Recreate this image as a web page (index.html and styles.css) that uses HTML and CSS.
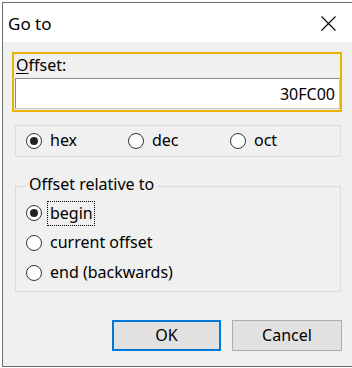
FILE: index.html
```html
<!DOCTYPE html>
<html lang="en">
<head>
    <meta charset="UTF-8">
    <title>Go to</title>
    <link rel="stylesheet" href="styles.css">
</head>
<body>
    <div class="window">
        <div class="titlebar">
            <span class="title">Go to</span>
            <svg class="close" width="15" height="15" viewBox="0 0 15 15">
                <path d="M0.5 0.5 L14.5 14.5 M14.5 0.5 L0.5 14.5" stroke="#000" stroke-width="1.1" fill="none"/>
            </svg>
        </div>
        <div class="content">
            <div class="focus-frame">
                <label class="field-label" for="offset"><u>O</u>ffset:</label>
                <input class="edit" type="text" id="offset" value="30FC00">
            </div>

            <div class="base-box">
                <label class="radio"><input type="radio" name="base" checked><span>hex</span></label>
                <label class="radio"><input type="radio" name="base"><span>dec</span></label>
                <label class="radio"><input type="radio" name="base"><span>oct</span></label>
            </div>

            <fieldset class="relative-box">
                <legend>Offset relative to</legend>
                <label class="radio row"><input type="radio" name="rel" checked><span class="focused">begin</span></label>
                <label class="radio row"><input type="radio" name="rel"><span>current offset</span></label>
                <label class="radio row"><input type="radio" name="rel"><span>end (backwards)</span></label>
            </fieldset>

            <div class="buttons">
                <button class="btn default">OK</button>
                <button class="btn">Cancel</button>
            </div>
        </div>
    </div>
</body>
</html>
```

FILE: styles.css
```css
body {
    margin: 0;
    background: #fff;
    overflow: hidden;
    font-family: "Noto Sans", "Open Sans", sans-serif;
    font-size: 16px;
    color: #000;
}

.window {
    margin: 2px 0 0 2px;
    width: 349px;
    height: 363px;
    border: 1px solid #6e6e6e;
    border-right: none;
    display: flex;
    flex-direction: column;
}

.titlebar {
    height: 39px;
    background: #fff;
    display: flex;
    align-items: center;
    justify-content: space-between;
}

.title {
    padding: 2px 0 0 5px;
    font-size: 17px;
}

.close {
    margin-right: 16px;
    margin-top: 1px;
}

.content {
    flex: 1;
    background: #f0f0f0;
    padding: 10px 0 0 9px;
}

/* yellow focus rectangle round the offset field */
.focus-frame {
    box-sizing: border-box;
    width: 330px;
    height: 60px;
    border: 2px solid #e8b400;
}

.field-label {
    display: block;
    height: 24px;
    line-height: 22px;
    padding-left: 2px;
}

.field-label u {
    text-underline-offset: 2px;
}

.edit {
    display: block;
    box-sizing: border-box;
    margin: 0 0 0 1px;
    width: 325px;
    height: 31px;
    border: 1px solid #8a8a8a;
    border-bottom-color: #c8c8c8;
    border-right-color: #c8c8c8;
    background: #fff;
    font: inherit;
    text-align: right;
    padding: 0 4px 0 0;
    outline: none;
}

.base-box {
    box-sizing: border-box;
    margin: 13px 0 0 3px;
    width: 326px;
    height: 32px;
    border: 1px solid #dcdcdc;
    padding-left: 10px;
    display: grid;
    grid-template-columns: 102px 102px 102px;
    align-items: center;
}

.radio {
    display: flex;
    align-items: center;
    gap: 8px;
}

.radio input {
    appearance: none;
    -webkit-appearance: none;
    margin: 0;
    width: 16px;
    height: 16px;
    border: 1.5px solid #333;
    border-radius: 50%;
    background: #fff;
    display: grid;
    place-content: center;
    flex: none;
}

.radio input:checked::before {
    content: "";
    width: 8px;
    height: 8px;
    border-radius: 50%;
    background: #222;
}

.radio span {
    line-height: 20px;
    padding-bottom: 2px;
}

.relative-box {
    box-sizing: border-box;
    margin: 19px 0 0 3px;
    width: 326px;
    border: 1px solid #dcdcdc;
    padding: 2px 0 3px 10px;
}

.relative-box legend {
    line-height: 16px;
    padding: 0 3px 4px;
}

.radio.row {
    height: 30px;
}

.radio span.focused {
    margin-left: -2px;
    padding: 1px 1px 2px 2px;
    line-height: 20px;
    outline: 1px dotted #000;
}

.buttons {
    width: 330px;
    margin-top: 28px;
    display: flex;
    justify-content: flex-end;
    gap: 11px;
}

.btn {
    box-sizing: border-box;
    width: 110px;
    height: 31px;
    background: #e1e1e1;
    border: 1px solid #adadad;
    font: inherit;
    color: #000;
    padding: 0 0 2px;
}

.btn.default {
    width: 109px;
    border: 2px solid #0078d7;
}
```
